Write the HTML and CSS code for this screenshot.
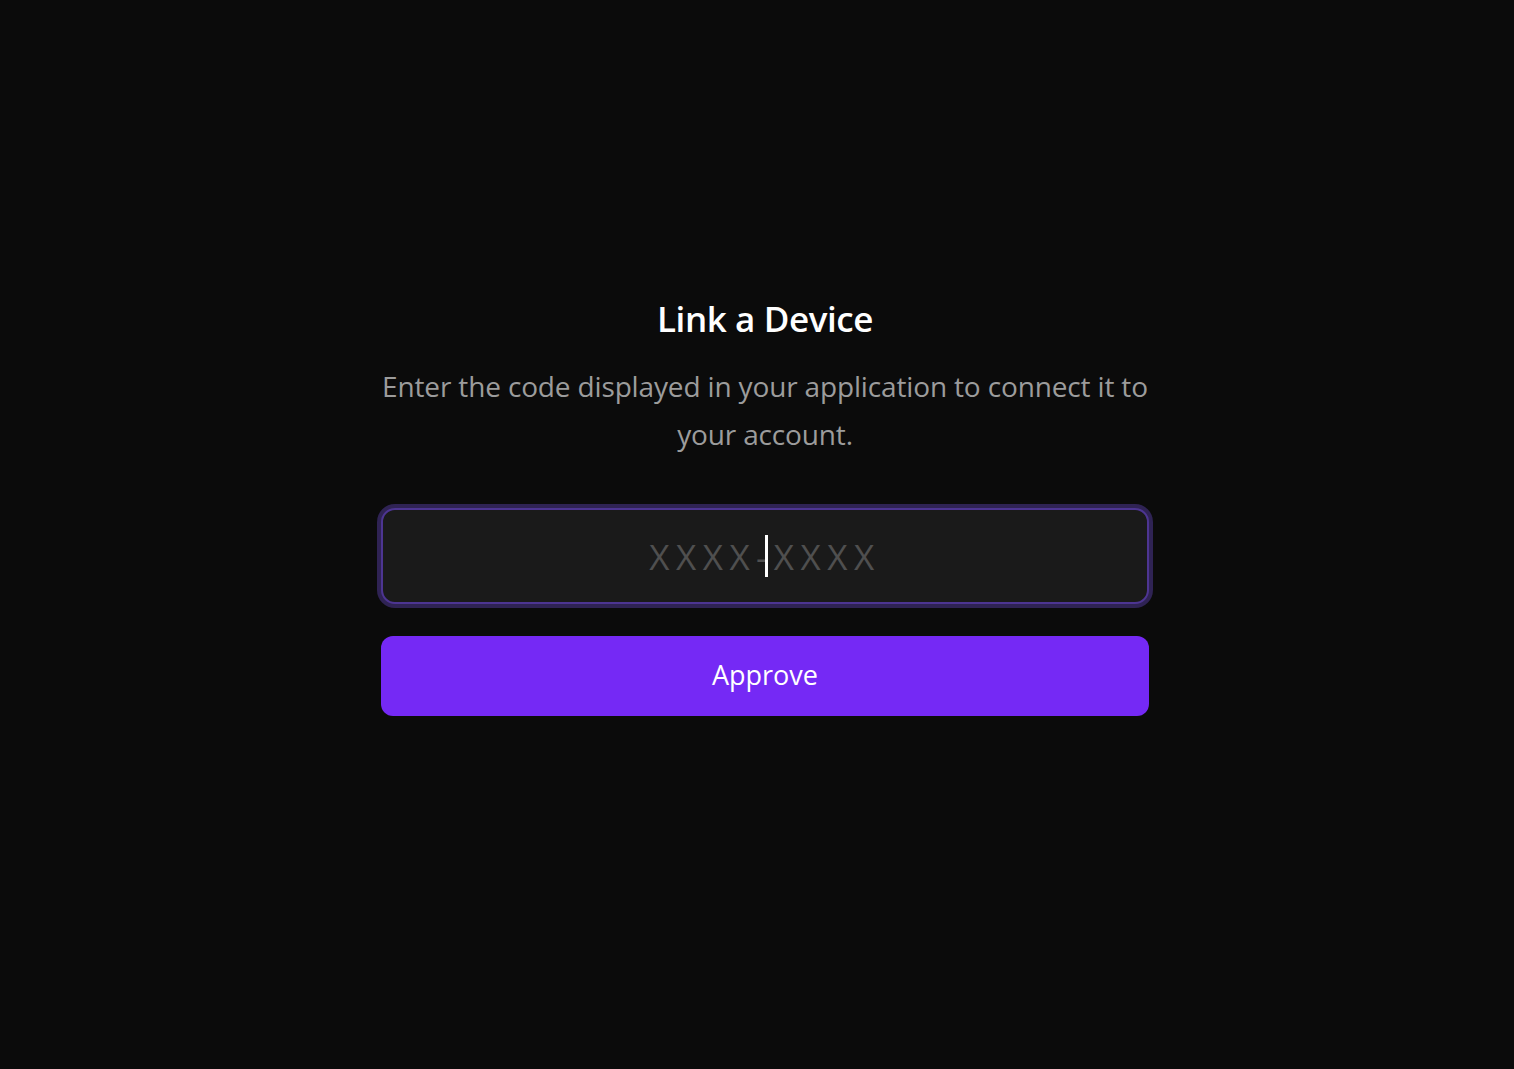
FILE: index.html
```html
<!DOCTYPE html>
<html lang="en">
<head>
<meta charset="utf-8">
<title>Link a Device</title>
<link rel="stylesheet" href="styles.css">
</head>
<body>
<main class="link">
  <h1 class="link-title">Link a Device</h1>
  <p class="link-text">Enter the code displayed in your application to connect it to your account.</p>
  <form class="link-form">
    <div class="code-field">
      <input class="code-input" type="text" placeholder="XXXX-XXXX" aria-label="Device code">
      <span class="code-caret"></span>
    </div>
    <button class="approve" type="button">Approve</button>
  </form>
</main>
</body>
</html>
```
FILE: styles.css
```css
html, body {
  margin: 0;
  padding: 0;
  background: #0b0b0b;
  height: 100%;
}
body {
  font-family: "Open Sans", "Noto Sans", sans-serif;
  color: #fff;
  padding-left: 16px;
  box-sizing: border-box;
}
.link {
  width: 768px;
  margin: 0 auto;
  padding-top: 297px;
  display: flex;
  flex-direction: column;
  text-align: center;
}
.link-title {
  margin: 0;
  font-size: 35px;
  line-height: 44px;
  font-weight: 600;
  letter-spacing: -0.4px;
  color: #ffffff;
}
.link-text {
  margin: 21px 0 0;
  font-size: 28px;
  line-height: 48px;
  font-weight: 400;
  letter-spacing: -0.15px;
  color: #9c9c9c;
}
.link-form {
  margin-top: 50px;
  display: flex;
  flex-direction: column;
  gap: 32px;
}
.code-field {
  position: relative;
  height: 96px;
}
.code-input {
  box-sizing: border-box;
  width: 100%;
  height: 96px;
  margin: 0;
  background: #1a1a1a;
  border: 2px solid #4d3592;
  border-radius: 14px;
  box-shadow: 0 0 0 4px #2f2354;
  outline: none;
  color: #fff;
  font-family: "Open Sans", "Noto Sans", sans-serif;
  font-size: 35px;
  letter-spacing: 6.5px;
  text-align: center;
  padding: 0;
  caret-color: transparent;
}
.code-input::placeholder {
  color: #4f4f4f;
  opacity: 1;
}
.code-caret {
  position: absolute;
  left: 384px;
  top: 27px;
  width: 3px;
  height: 42px;
  background: #fff;
}
.approve {
  height: 80px;
  border: 0;
  border-radius: 12px;
  background: #7529f5;
  color: #fff;
  font-family: "Open Sans", "Noto Sans", sans-serif;
  font-size: 27px;
  padding: 0 0 4px;
  cursor: pointer;
}
```
